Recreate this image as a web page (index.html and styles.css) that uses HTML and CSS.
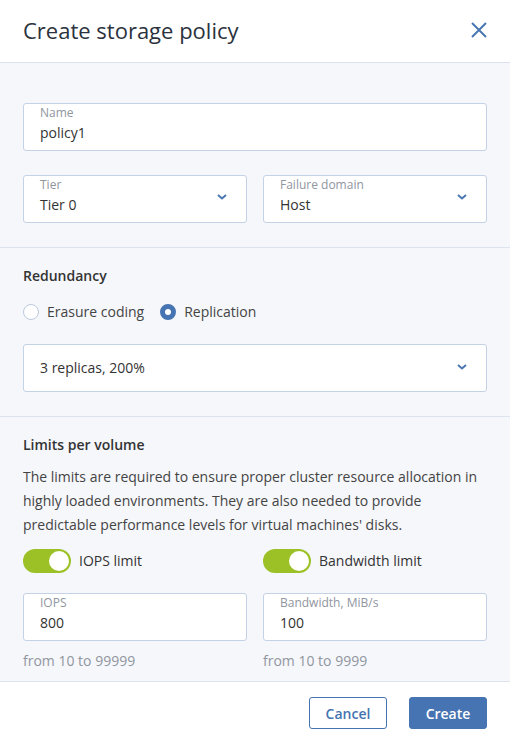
FILE: index.html
```html
<!DOCTYPE html>
<html>
<head>
<meta charset="utf-8">
<link rel="stylesheet" href="styles.css">
</head>
<body>
<div class="dialog">
  <div class="header">
    <div class="title">Create storage policy</div>
    <svg class="close" width="16" height="16" viewBox="0 0 16 16"><path d="M1 1L15 15M15 1L1 15" stroke="#4a76b2" stroke-width="2" fill="none"/></svg>
  </div>
  <div class="content">
    <div class="section first">
      <div class="field">
        <div class="label">Name</div>
        <div class="value">policy1</div>
      </div>
      <div class="row">
        <div class="field select">
          <div class="fbody">
            <div class="label">Tier</div>
            <div class="value">Tier 0</div>
          </div>
          <svg class="chev" width="10" height="6" viewBox="0 0 10 6"><path d="M1 1L5 4.5L9 1" stroke="#4a76b2" stroke-width="2" fill="none"/></svg>
        </div>
        <div class="field select">
          <div class="fbody">
            <div class="label">Failure domain</div>
            <div class="value">Host</div>
          </div>
          <svg class="chev" width="10" height="6" viewBox="0 0 10 6"><path d="M1 1L5 4.5L9 1" stroke="#4a76b2" stroke-width="2" fill="none"/></svg>
        </div>
      </div>
    </div>
    <div class="section">
      <div class="heading">Redundancy</div>
      <div class="radios">
        <div class="radio"><span class="dot"></span>Erasure coding</div>
        <div class="radio"><span class="dot on"></span>Replication</div>
      </div>
      <div class="field select single">
        <div class="value">3 replicas, 200%</div>
        <svg class="chev" width="10" height="6" viewBox="0 0 10 6"><path d="M1 1L5 4.5L9 1" stroke="#4a76b2" stroke-width="2" fill="none"/></svg>
      </div>
    </div>
    <div class="section last">
      <div class="heading">Limits per volume</div>
      <p class="desc">The limits are required to ensure proper cluster resource allocation in highly loaded environments. They are also needed to provide predictable performance levels for virtual machines' disks.</p>
      <div class="row">
        <div class="col">
          <div class="toggle-row"><span class="toggle"><span class="knob"></span></span>IOPS limit</div>
          <div class="field">
            <div class="label">IOPS</div>
            <div class="value">800</div>
          </div>
          <div class="hint">from 10 to 99999</div>
        </div>
        <div class="col">
          <div class="toggle-row"><span class="toggle"><span class="knob"></span></span>Bandwidth limit</div>
          <div class="field">
            <div class="label">Bandwidth, MiB/s</div>
            <div class="value">100</div>
          </div>
          <div class="hint">from 10 to 9999</div>
        </div>
      </div>
    </div>
  </div>
  <div class="footer">
    <button class="btn cancel">Cancel</button>
    <button class="btn create">Create</button>
  </div>
</div>
</body>
</html>
```
FILE: styles.css
```css
* { box-sizing: border-box; }
html, body { margin: 0; padding: 0; }
body {
  width: 510px;
  height: 744px;
  font-family: "Open Sans", "Noto Sans", sans-serif;
  font-size: 14px;
  color: #333;
  background: #fff;
  overflow: hidden;
}
.dialog {
  display: flex;
  flex-direction: column;
  height: 744px;
}
.header {
  height: 63px;
  flex: none;
  border-bottom: 1px solid #d9e2ee;
  display: flex;
  align-items: center;
  justify-content: space-between;
  padding: 0 23px 0 23px;
}
.title {
  font-size: 22px;
  line-height: 30px;
  color: #2b323d;
  margin-top: -2px;
}
.close { margin-top: -2px; }
.content {
  flex: 1;
  background: #f6f7fb;
  display: flex;
  flex-direction: column;
}
.section {
  padding: 18px 23px 24px;
  border-bottom: 1px solid #dde4ee;
  display: flex;
  flex-direction: column;
}
.section.first {
  padding-top: 40px;
  gap: 24px;
}
.section.last {
  border-bottom: none;
  padding-bottom: 10px;
  flex: 1;
}
.row {
  display: flex;
  gap: 16px;
}
.row > * { flex: 1; min-width: 0; }
.field {
  height: 48px;
  background: #fff;
  border: 1px solid #c4d2e6;
  border-radius: 3px;
  padding: 1px 16px 0;
  display: flex;
  flex-direction: column;
}
.field .label + .value { margin-top: 2px; }
.field.select {
  flex-direction: row;
  align-items: center;
  padding-top: 0;
  padding-right: 19px;
}
.fbody {
  flex: 1;
  display: flex;
  flex-direction: column;
  align-self: stretch;
  padding-top: 1px;
}
.field.single .value { flex: 1; }
.chev { flex: none; margin-top: -4px; }
.field.single .chev { margin-top: -2px; }
.label {
  font-size: 12px;
  line-height: 16px;
  color: #9096a0;
}
.value {
  font-size: 14px;
  line-height: 20px;
  color: #333;
}
.heading {
  font-size: 14px;
  font-weight: 600;
  line-height: 20px;
  color: #333;
}
.radios {
  display: flex;
  gap: 16px;
  margin-top: 16px;
  margin-bottom: 22px;
}
.radio {
  display: flex;
  align-items: center;
  gap: 8px;
  line-height: 20px;
  color: #444;
}
.dot {
  width: 16px;
  height: 16px;
  border-radius: 50%;
  border: 1px solid #bccadc;
  background: #fff;
  flex: none;
}
.dot.on {
  border: 5px solid #4673b1;
  background: #fff;
}
.desc {
  margin: 10px 0 12px;
  line-height: 24px;
  color: #444;
}
.col {
  display: flex;
  flex-direction: column;
}
.toggle-row {
  display: flex;
  align-items: center;
  gap: 8px;
  height: 24px;
  line-height: 20px;
  color: #333;
  margin-bottom: 20px;
}
.toggle {
  width: 48px;
  height: 24px;
  border-radius: 12px;
  background: #9cc126;
  display: flex;
  align-items: center;
  justify-content: flex-end;
  padding-right: 2px;
  flex: none;
}
.knob {
  width: 20px;
  height: 20px;
  border-radius: 50%;
  background: #fff;
}
.hint {
  margin-top: 10px;
  line-height: 20px;
  color: #9096a0;
}
.footer {
  flex: none;
  height: 63px;
  border-top: 1px solid #dde4ee;
  display: flex;
  justify-content: flex-end;
  align-items: flex-start;
  padding: 15px 23px 0;
  gap: 22px;
  background: #fff;
}
.btn {
  width: 78px;
  height: 32px;
  border-radius: 3px;
  font-family: "Open Sans", "Noto Sans", sans-serif;
  font-size: 14px;
  font-weight: 600;
  padding: 0;
  cursor: pointer;
}
.cancel {
  background: #fff;
  border: 1px solid #4673b1;
  color: #4673b1;
}
.create {
  background: #4673b1;
  border: 1px solid #4673b1;
  color: #fff;
}
```
